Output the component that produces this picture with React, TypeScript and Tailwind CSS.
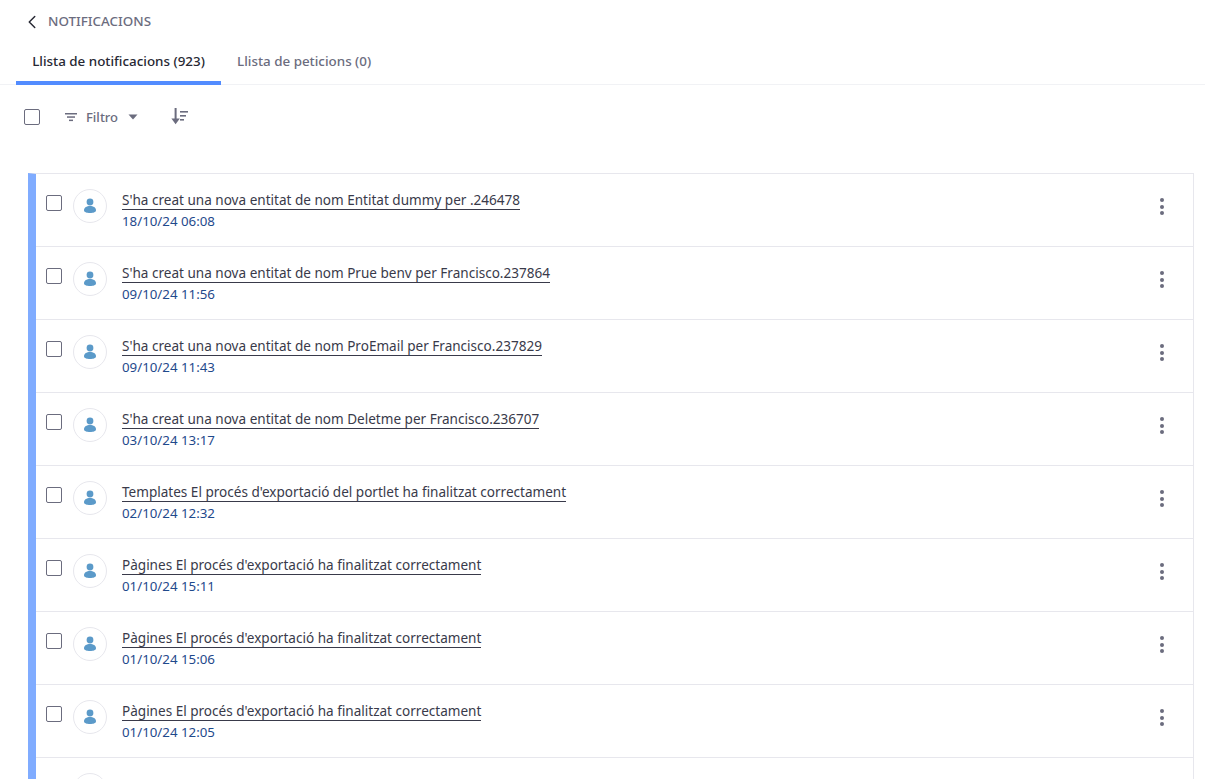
import React from 'react'
import { ChevronLeft } from 'lucide-react'

const rows = [
  { title: "S'ha creat una nova entitat de nom Entitat dummy per .246478", date: '18/10/24 06:08' },
  { title: "S'ha creat una nova entitat de nom Prue benv per Francisco.237864", date: '09/10/24 11:56' },
  { title: "S'ha creat una nova entitat de nom ProEmail per Francisco.237829", date: '09/10/24 11:43' },
  { title: "S'ha creat una nova entitat de nom Deletme per Francisco.236707", date: '03/10/24 13:17' },
  { title: "Templates El procés d'exportació del portlet ha finalitzat correctament", date: '02/10/24 12:32' },
  { title: "Pàgines El procés d'exportació ha finalitzat correctament", date: '01/10/24 15:11' },
  { title: "Pàgines El procés d'exportació ha finalitzat correctament", date: '01/10/24 15:06' },
  { title: "Pàgines El procés d'exportació ha finalitzat correctament", date: '01/10/24 12:05' },
  { title: '', date: '' },
]

function UserIcon() {
  return (
    <svg width="14" height="16" viewBox="0 0 14 16" fill="#5b9ac9">
      <circle cx="7" cy="4" r="3.4" />
      <path d="M1 12.2c0-2.6 2.6-4.2 6-4.2s6 1.6 6 4.2c0 1.8-2.6 2.8-6 2.8s-6-1-6-2.8z" />
    </svg>
  )
}

function Row({ title, date }: { title: string; date: string }) {
  return (
    <div className="h-[73px] shrink-0 flex items-start border-b border-[#e7e7ed] pl-[10px] pr-[29px]">
      <div className="mt-[21px] w-4 h-4 rounded-[2px] border border-[#6b6c7e] bg-white"></div>
      <div className="ml-[11px] mt-[15px] w-[34px] h-[34px] rounded-full border border-[#e7e7ed] flex items-center justify-center">
        <UserIcon />
      </div>
      <div className="ml-[15px] mt-[17px] flex flex-col items-start">
        {title && <span className="text-[13.55px] leading-[18px] text-[#393a4a] border-b border-[#393a4a]">{title}</span>}
        {date && <span className="mt-[2px] text-[13.3px] leading-[18px] text-[#1f4a8c]">{date}</span>}
      </div>
      <div className="ml-auto mt-[24px] flex flex-col gap-[2.5px]">
        <span className="w-[4px] h-[4px] rounded-full bg-[#6b6c7e]"></span>
        <span className="w-[4px] h-[4px] rounded-full bg-[#6b6c7e]"></span>
        <span className="w-[4px] h-[4px] rounded-full bg-[#6b6c7e]"></span>
      </div>
    </div>
  )
}

export default function App() {
  return (
    <div className="w-[1227px] h-[779px] overflow-hidden bg-white font-['Noto_Sans',sans-serif]">
      <div className="h-[43px] flex items-center pl-[21px]">
        <ChevronLeft size={22} strokeWidth={1.6} className="text-[#272833]" />
        <span className="ml-[5px] text-[13.4px] font-medium text-[#6b6c7e]">NOTIFICACIONS</span>
      </div>
      <div className="w-[1205px] h-[42px] flex border-b border-[#f1f2f5] pl-[16px]">
        <div className="w-[205px] h-[42px] border-b-4 border-[#528cff] flex justify-center pt-[7px] text-[13.4px] leading-[22px] font-medium text-[#272833]">
          Llista de notificacions (923)
        </div>
        <div className="ml-[16px] pt-[7px] text-[13.4px] leading-[22px] font-medium text-[#6b6c7e]">Llista de peticions (0)</div>
      </div>
      <div className="h-[64px] flex items-center pl-[24px]">
        <div className="w-4 h-4 rounded-[2px] border border-[#6b6c7e] bg-white"></div>
        <svg className="ml-[24px]" width="14" height="10" viewBox="0 0 14 10" fill="#6b6c7e">
          <rect x="1" y="1" width="12" height="1.5" />
          <rect x="3" y="4.3" width="8" height="1.5" />
          <rect x="5" y="7.6" width="4" height="1.5" />
        </svg>
        <span className="ml-[8px] text-[13px] leading-[20px] font-medium text-[#6b6c7e]">Filtro</span>
        <svg className="ml-[10px]" width="10" height="6" viewBox="0 0 10 6" fill="#6b6c7e">
          <path d="M0.5 0.5h9L5 5.5z" />
        </svg>
        <svg className="ml-[33px]" width="18" height="18" viewBox="0 0 18 18" fill="#6b6c7e">
          <rect x="3.6" y="0" width="2" height="14" />
          <path d="M0.4 10.5h8.4L4.6 16.2z" />
          <rect x="9" y="3" width="8" height="1.6" />
          <rect x="9" y="7" width="6" height="1.6" />
          <rect x="9" y="11" width="4" height="1.6" />
        </svg>
      </div>
      <div className="ml-[28px] mt-[24px] w-[1166px] h-[606px] flex flex-col overflow-hidden border-l-8 border-r border-t border-l-[#80acff] border-r-[#e7e7ed] border-t-[#e7e7ed]">
        {rows.map((r, i) => (
          <Row key={i} title={r.title} date={r.date} />
        ))}
      </div>
    </div>
  )
}
